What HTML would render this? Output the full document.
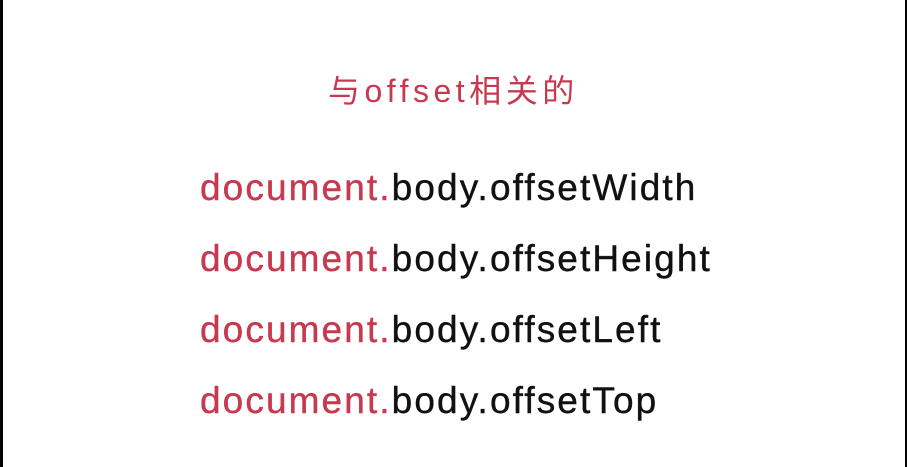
<!DOCTYPE html>
<html><head><meta charset="utf-8"><style>
html,body{margin:0;padding:0}
body{width:907px;height:467px;background:#fff;position:relative;overflow:hidden;font-family:"Liberation Sans","Noto Sans CJK SC",sans-serif}
.l{position:absolute;left:0;top:0;width:3px;height:467px;background:#000}
.r{position:absolute;left:905px;top:0;width:2px;height:467px;background:#000}
.t{position:absolute;left:328px;top:71px;font-size:32px;letter-spacing:4.5px;color:#c8394f;white-space:nowrap;line-height:40px}
.c{position:absolute;left:200px;font-size:37px;letter-spacing:2.1px;color:#111;white-space:nowrap;line-height:44px;-webkit-text-stroke:0.4px currentColor}
.c span{color:#c8394f}
</style></head><body>
<div class="l"></div><div class="r"></div>
<div class="t">与offset相关的</div>
<div class="c" style="top:166px"><span>document.</span>body.offsetWidth</div>
<div class="c" style="top:237px"><span>document.</span>body.offsetHeight</div>
<div class="c" style="top:308px"><span>document.</span>body.offsetLeft</div>
<div class="c" style="top:379px"><span>document.</span>body.offsetTop</div>
</body></html>
